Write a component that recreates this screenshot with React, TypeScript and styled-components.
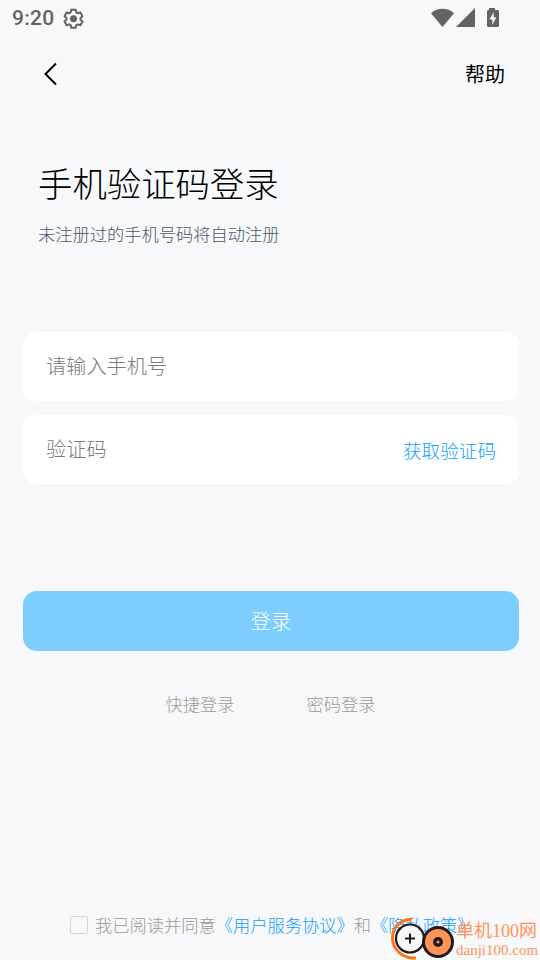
import React from "react";
import styled, { createGlobalStyle } from "styled-components";

const Global = createGlobalStyle`
  * { box-sizing: border-box; }
  body { margin: 0; background: #f7f8fa; }
  button, input { font: inherit; border: 0; padding: 0; margin: 0; background: none; outline: 0; }
`;

const Screen = styled.main`
  position: relative;
  display: flex;
  flex-direction: column;
  width: 540px;
  height: 960px;
  overflow: hidden;
  background: #f7f8fa;
  color: #000;
  font-family: "Noto Sans CJK SC", sans-serif;
  font-weight: 300;
`;

const StatusBar = styled.header`
  display: flex;
  align-items: center;
  height: 37px;
  padding: 0 41px 0 12px;
  color: #636363;
`;

const Clock = styled.span`
  width: 51px;
  font: 500 21px/37px Roboto, sans-serif;
  letter-spacing: 0.3px;
`;

const StatusIcons = styled.div`
  display: flex;
  margin-left: auto;
`;

const NavBar = styled.nav`
  display: flex;
  align-items: center;
  justify-content: space-between;
  height: 74px;
  padding: 0 35px 0 42px;
`;

const PlainButton = styled.button`
  display: flex;
  color: inherit;
  font-size: 20px;
  line-height: 30px;
  font-weight: 400;
`;

const Heading = styled.section`
  height: 221px;
  padding: 46px 38px 0;
`;

const Title = styled.h1`
  margin: 0;
  font-size: 34.4px;
  line-height: 50px;
  font-weight: 300;
`;

const Subtitle = styled.p`
  margin: 14px 0 0;
  color: #4b5669;
  font-size: 17.25px;
  line-height: 26px;
`;

const Form = styled.form`
  display: flex;
  flex-direction: column;
  gap: 14px;
  padding: 0 21px 0 23px;
`;

const Field = styled.label`
  display: flex;
  align-items: center;
  height: 69px;
  padding: 0 23px;
  border-radius: 14px;
  background: #fff;
`;

const Input = styled.input`
  flex: 1;
  min-width: 0;
  height: 30px;
  font-size: 20.2px;
  margin-bottom: 2px;
  &::placeholder { color: #7b7b7b; opacity: 1; }
`;

const CodeButton = styled.button`
  color: #119ffb;
  font-size: 18.6px;
  line-height: 28px;
`;

const Submit = styled.button`
  height: 60px;
  margin-top: 93px;
  padding-bottom: 2px;
  border-radius: 14px;
  background: #7dcdfd;
  color: #fff;
  font-size: 20.2px;
`;

const Alternatives = styled.div`
  display: flex;
  justify-content: center;
  gap: 72px;
  padding: 40px 0 0 1px;
`;

const AltButton = styled.button`
  color: #999;
  font-size: 17.25px;
  line-height: 26px;
`;

const Agreement = styled.label`
  display: flex;
  align-items: center;
  height: 26px;
  margin: auto 0 22px;
  padding-left: 70px;
  color: #999;
  font-size: 17.25px;
  line-height: 26px;
  white-space: nowrap;
`;

const Checkbox = styled.input`
  appearance: none;
  width: 18px;
  height: 18px;
  margin-right: 7px;
  border: 1.5px solid #d5d5d7;
  border-radius: 2px;
`;

const Policy = styled.span`
  color: #119ffb;
`;

const Watermark = styled.aside`
  position: absolute;
  left: 386px;
  top: 912px;
  display: flex;
  width: 154px;
  height: 48px;
  color: #ff935a;
`;

const WatermarkText = styled.div`
  display: flex;
  flex-direction: column;
  margin-left: -6px;
  padding-top: 7px;
  font-family: "Liberation Serif", "Noto Sans CJK SC", serif;
  white-space: nowrap;
`;

const SiteName = styled.span`
  font-size: 18px;
  line-height: 24px;
  font-weight: 400;
`;

const SiteUrl = styled.span`
  font-size: 15px;
  line-height: 14px;
  font-weight: 400;
`;

export default function App() {
  return (
    <Screen>
      <Global />
      <StatusBar>
        <Clock>9:20</Clock>
        <svg width="21" height="21" viewBox="0 0 24 24" fill="none" stroke="currentColor" strokeWidth="2.3" strokeLinejoin="round">
          <path d="M9.4 2h5.2l.6 3 1.7 1 2.9-1 2.5 4.4-2.3 2v2l2.3 2-2.5 4.3-2.9-1-1.7 1-.6 2.8H9.4l-.6-2.8-1.7-1-2.9 1-2.5-4.3 2.3-2v-2l-2.3-2L4.2 5l2.9 1 1.7-1z" />
          <circle cx="12" cy="12.4" r="4" fill="currentColor" stroke="none" />
        </svg>
        <StatusIcons>
          <svg width="68" height="21" viewBox="0 0 68 21" fill="currentColor">
            <path d="M0 5.2C6.5-.6 16.5-.6 23 5.2L11.5 19z" />
            <path d="M25 19 44 0v19z" />
            <path d="M58 0h6v2h2.5c.9 0 1.5.6 1.5 1.5v14c0 .9-.6 1.5-1.5 1.5h-9c-.9 0-1.5-.6-1.5-1.5v-14c0-.9.6-1.5 1.5-1.5H58z" />
            <path fill="#f7f8fa" d="M62.7 4v5.2h2.7L61.3 17v-5.5h-2.8z" />
          </svg>
        </StatusIcons>
      </StatusBar>
      <NavBar>
        <PlainButton aria-label="返回">
          <svg width="18" height="24" viewBox="0 0 18 24" fill="none" stroke="currentColor" strokeWidth="2">
            <path d="M14 1.5 3.5 12 14 22.5" />
          </svg>
        </PlainButton>
        <PlainButton>帮助</PlainButton>
      </NavBar>
      <Heading>
        <Title>手机验证码登录</Title>
        <Subtitle>未注册过的手机号码将自动注册</Subtitle>
      </Heading>
      <Form>
        <Field><Input placeholder="请输入手机号" /></Field>
        <Field>
          <Input placeholder="验证码" />
          <CodeButton type="button">获取验证码</CodeButton>
        </Field>
        <Submit type="button">登录</Submit>
      </Form>
      <Alternatives>
        <AltButton>快捷登录</AltButton>
        <AltButton>密码登录</AltButton>
      </Alternatives>
      <Agreement>
        <Checkbox type="checkbox" />
        我已阅读并同意<Policy>《用户服务协议》</Policy>和<Policy>《隐私政策》</Policy>
      </Agreement>
      <Watermark>
        <svg width="76" height="48" viewBox="0 0 76 48" fill="none">
          <circle cx="24" cy="26.5" r="14" fill="#f7f8fa" stroke="#231a1c" strokeWidth="2.2" />
          <path d="M26 7C12 8 6 17 6.500 27S16 47 30 46" stroke="#ff7413" strokeWidth="3" />
          <path d="M19 26.500h10M24 21.500v10" stroke="#231a1c" strokeWidth="2" />
          <circle cx="52" cy="30" r="14.500" fill="#ff935a" stroke="#231a1c" strokeWidth="3" />
          <circle cx="52" cy="30" r="5" fill="#231a1c" />
          <circle cx="52" cy="30" r="1.500" fill="#ff935a" />
        </svg>
        <WatermarkText>
          <SiteName>单机100网</SiteName>
          <SiteUrl>danji100.com</SiteUrl>
        </WatermarkText>
      </Watermark>
    </Screen>
  );
}
